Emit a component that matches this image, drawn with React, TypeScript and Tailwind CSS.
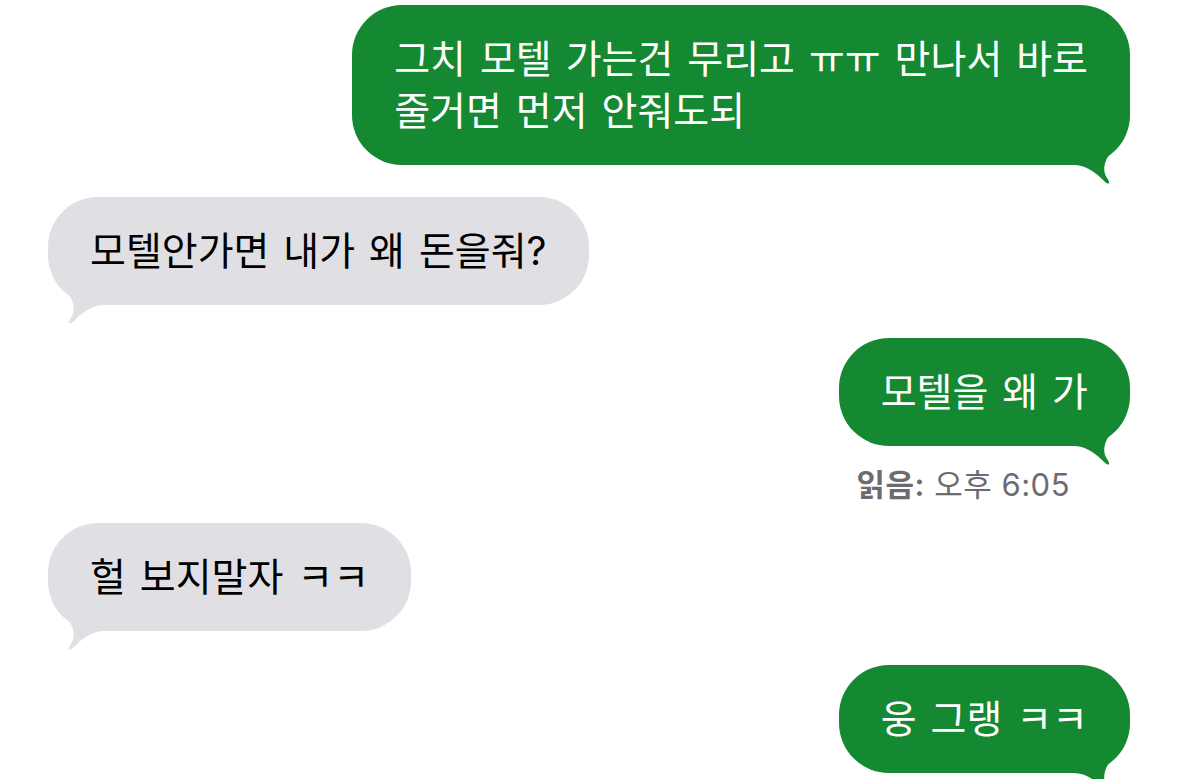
import type { ReactNode } from 'react'

const font = { fontFamily: 'Inter, "Noto Sans CJK KR", sans-serif' }

// bubble tail, drawn for the right side; mirrored for incoming messages
function Tail({ color, side }: { color: string; side: 'left' | 'right' }) {
  return (
    <svg
      width="60"
      height="40"
      viewBox="0 0 60 40"
      className={`absolute bottom-[-20px] ${side === 'right' ? 'right-0' : 'left-0 -scale-x-100'}`}
    >
      <path
        d="M0 0 L0 20 L4 20 C14 20 24 26 32 34 C35 37 37 39 38.5 38.5 C40 38 39 36 37 33 C31 24 35 12 46 2 L46 0 Z"
        fill={color}
      />
    </svg>
  )
}

function Bubble({ side, children, className = '' }: { side: 'left' | 'right'; children: ReactNode; className?: string }) {
  const isMine = side === 'right'
  const color = isMine ? '#158832' : '#e0e0e4'
  return (
    <div className={`relative ${isMine ? 'self-end' : 'self-start'} ${className}`}>
      <div
        className={`relative z-10 whitespace-nowrap rounded-[50px] px-[42px] py-[28px] text-[39px] leading-[52px] [word-spacing:3px] ${
          isMine ? 'bg-[#158832] text-white' : 'bg-[#e0e0e4] text-black'
        }`}
      >
        {children}
      </div>
      <Tail color={color} side={side} />
    </div>
  )
}

export default function App() {
  return (
    <div className="h-[779px] w-full overflow-hidden bg-white" style={font}>
      <div className="flex flex-col pl-[48px] pr-[49px] pt-[5px]">
        <Bubble side="right">
          그치 모텔 가는건 무리고 ㅠㅠ 만나서 바로
          <br />
          줄거면 먼저 안줘도되
        </Bubble>

        <Bubble side="left" className="mt-[32px]">
          모텔안가면 내가 왜 돈을줘?
        </Bubble>

        <Bubble side="right" className="mt-[33px]">
          모텔을 왜 가
        </Bubble>

        {/* read receipt */}
        <div className="mr-[60px] mt-[22px] self-end text-[31px] leading-[34px] tracking-[0.5px] text-[#6b6b70]">
          <span className="font-semibold">읽음:</span> 오후 6:05
        </div>

        <Bubble side="left" className="mt-[21px]">
          헐 보지말자 ㅋㅋ
        </Bubble>

        <Bubble side="right" className="mt-[34px]">
          웅 그랭 ㅋㅋ
        </Bubble>
      </div>
    </div>
  )
}
